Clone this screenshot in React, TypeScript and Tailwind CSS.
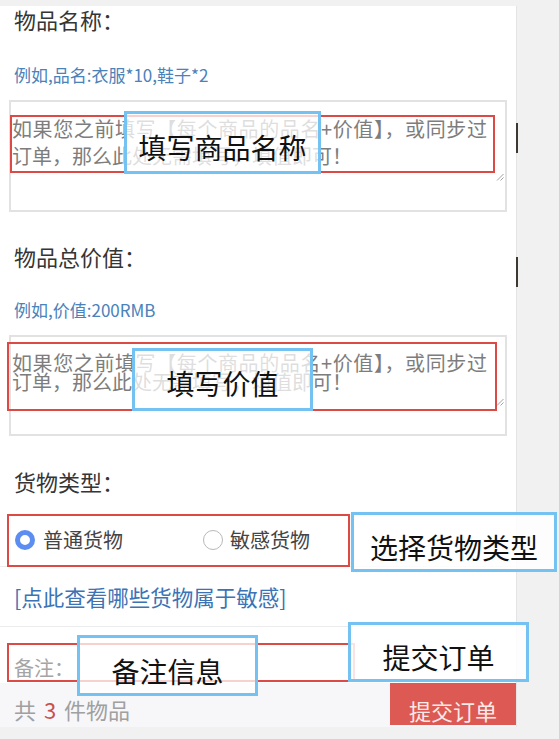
import React from "react";

function Handle({ left, top }: { left: number; top: number }) {
  return (
    <svg
      className="absolute"
      style={{ left, top }}
      width="8"
      height="8"
      viewBox="0 0 8 8"
    >
      <line x1="7.5" y1="1" x2="1" y2="7.5" stroke="#a0a0a0" strokeWidth="1" />
      <line x1="7.5" y1="4.5" x2="4.5" y2="7.5" stroke="#a0a0a0" strokeWidth="1" />
    </svg>
  );
}

export default function App() {
  return (
    <div className="relative w-[559px] h-[739px] overflow-hidden bg-[#f1f1f1] font-['Noto_Sans_CJK_SC','Noto_Sans',sans-serif]">
      {/* main column */}
      <div className="mt-[6px] w-[517px] border-r border-[#e4e4e4] bg-white flex flex-col">
        <div className="h-[26px] pl-[14px] text-[22px] leading-[26px] text-[#353535]">物品名称：</div>
        <div className="mt-[33px] h-[20px] pl-[14px] text-[17px] leading-[20px] text-[#4a82ba]">
          例如,品名:衣服*10,鞋子*2
        </div>
        <div className="mt-[15px] ml-[9px] w-[498px] h-[112px] border-2 border-[#e2e2e2] pt-[13px] pl-[1px] text-[20px] leading-[27px] text-[#7d7d7d]">
          <div className="whitespace-nowrap tracking-[0.6px]">如果您之前填写【每个商品的品名+价值】，或同步过</div>
          <div className="whitespace-nowrap">订单，那么此处无需填写，填值即可！</div>
        </div>

        <div className="mt-[31px] h-[26px] pl-[14px] text-[22px] leading-[26px] text-[#353535]">物品总价值：</div>
        <div className="mt-[31px] h-[20px] pl-[14px] text-[17px] leading-[20px] text-[#4a82ba]">
          例如,价值:200RMB
        </div>
        <div className="mt-[15px] ml-[9px] w-[498px] h-[101px] border-2 border-[#e2e2e2] pt-[16px] pl-[1px] text-[20px] leading-[19px] text-[#7d7d7d]">
          <div className="whitespace-nowrap tracking-[0.6px]">如果您之前填写【每个商品的品名+价值】，或同步过</div>
          <div className="whitespace-nowrap">订单，那么此处无需填写，填值即可！</div>
        </div>

        <div className="mt-[32px] h-[26px] pl-[14px] text-[22px] leading-[26px] text-[#353535]">货物类型：</div>
        <div className="mt-[20px] h-[53px] border-b border-[#ededed] flex items-center pl-[15px] text-[20px] text-[#444]">
          <span className="w-[20px] h-[20px] rounded-full border-[5px] border-[#5b8ef0] bg-white" />
          <span className="ml-[8px] leading-[24px]">普通货物</span>
          <span className="ml-[80px] w-[20px] h-[20px] rounded-full border-[1.5px] border-[#b8b8b8] bg-white" />
          <span className="ml-[7px] leading-[24px]">敏感货物</span>
        </div>
        <div className="mt-[16px] h-[28px] pl-[14px] text-[21.5px] leading-[28px] text-[#3b73b5]">
          [点此查看哪些货物属于敏感]
        </div>

        <div className="mt-[15px] h-[57px] border-t border-[#ececec] pt-[29px] pl-[14px] text-[20px] leading-[24px] text-[#a5a5a5]">
          备注：
        </div>
        <div className="h-[44px] bg-[#f7f7f9] flex justify-between items-start">
          <div className="pt-[13px] pl-[14px] text-[22px] leading-[26px] text-[#a0a0a0]">
            共 <span className="mx-[3px] text-[#c9504f]">3</span> 件物品
          </div>
          <div className="w-[126px] h-[42px] bg-[#dc5a53] flex items-center justify-center pt-[12px] text-[22px] leading-[26px] text-[#fbe9e8]">
            提交订单
          </div>
        </div>
      </div>

      {/* scanner marks on right edge */}
      <div className="absolute left-[516px] top-[123px] w-[2px] h-[30px] bg-[#3d3832]" />
      <div className="absolute left-[516px] top-[257px] w-[2px] h-[30px] bg-[#3d3832]" />

      <Handle left={496} top={173} />
      <Handle left={496} top={398} />

      {/* red annotation boxes */}
      <div className="absolute left-[10px] top-[115px] w-[485px] h-[58px] border-2 border-[#dc4a45]" />
      <div className="absolute left-[7px] top-[342px] w-[490px] h-[69px] border-2 border-[#dc4a45]" />
      <div className="absolute left-[7px] top-[514px] w-[343px] h-[53px] border-2 border-[#dc4a45]" />
      <div className="absolute left-[7px] top-[643px] w-[348px] h-[39px] border-2 border-[#dc4a45]" />

      {/* blue annotation boxes */}
      <div className="absolute left-[124px] top-[111px] w-[197px] h-[63px] border-[3px] border-[#74c2f2] bg-white/75 flex items-center justify-center pt-[9px] text-[28px] leading-[34px] text-[#111]">
        填写商品名称
      </div>
      <div className="absolute left-[132px] top-[348px] w-[181px] h-[63px] border-[3px] border-[#74c2f2] bg-white/75 flex items-center justify-center pt-[7px] text-[28px] leading-[34px] text-[#111]">
        填写价值
      </div>
      <div className="absolute left-[351px] top-[512px] w-[206px] h-[60px] border-[3px] border-[#74c2f2] bg-white/85 flex items-center justify-center pt-[10px] text-[28px] leading-[34px] text-[#111]">
        选择货物类型
      </div>
      <div className="absolute left-[77px] top-[635px] w-[181px] h-[61px] border-[3px] border-[#74c2f2] bg-white/75 flex items-center justify-center pt-[11px] text-[28px] leading-[34px] text-[#111]">
        备注信息
      </div>
      <div className="absolute left-[348px] top-[622px] w-[181px] h-[60px] border-[3px] border-[#74c2f2] bg-white/85 flex items-center justify-center pt-[10px] text-[28px] leading-[34px] text-[#111]">
        提交订单
      </div>
    </div>
  );
}
